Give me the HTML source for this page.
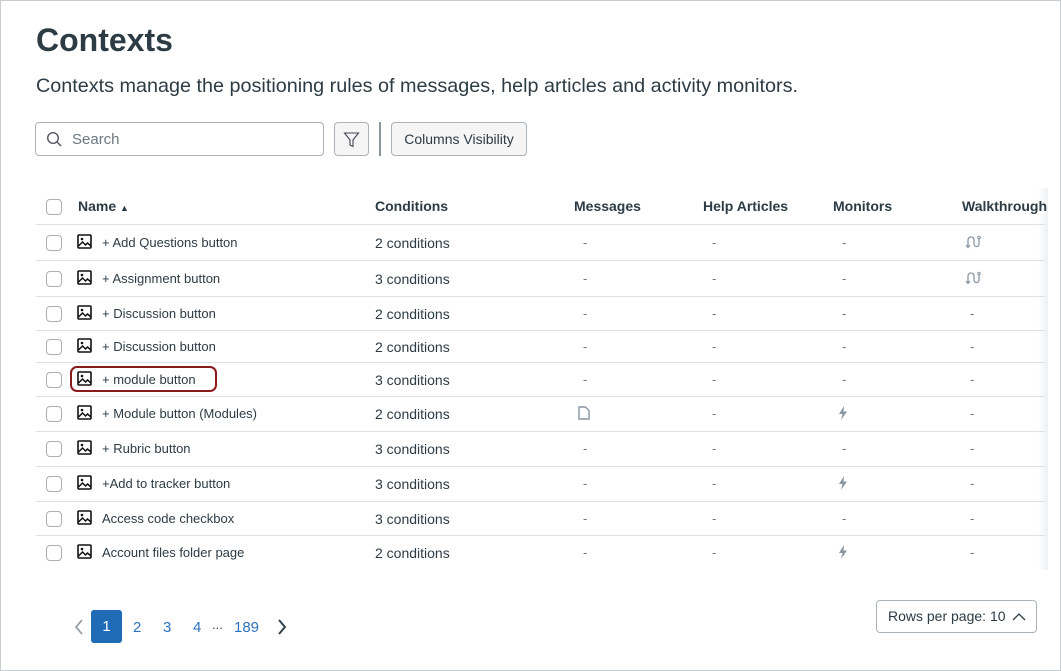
<!DOCTYPE html><html><head><style>
body{margin:0;width:1061px;height:671px;overflow:hidden;background:#fff;font-family:"Liberation Sans",sans-serif;color:#2d3b45}
.frame{position:absolute;left:0;top:0;width:1059px;height:669px;border:1px solid #c7cdd1}
.abs{position:absolute}
h1{position:absolute;left:36px;top:22px;margin:0;font-size:32px;font-weight:bold;color:#2d3b45}
.sub{left:36px;top:75px;font-size:19.8px;color:#2d3b45}
.search{left:35px;top:122px;width:287px;height:32px;border:1px solid #aab3ba;border-radius:4px}
.btn{border:1px solid #aab3ba;border-radius:4px;background:#f5f5f5;height:32px}
.cb{position:absolute;left:46px;width:14px;height:14px;border:1px solid #a8b0b6;border-radius:4px}
.row{position:absolute;left:0;width:1045px;font-size:13px;color:#2d3b45}
.row span{position:absolute;top:0}
.line{position:absolute;left:36px;width:1009px;height:1px;background:#dde1e4}
.dash{color:#6b7780}
.hd{font-weight:bold;font-size:14px}
</style></head><body><div class="frame"></div>
<h1>Contexts</h1>
<div class="abs sub">Contexts manage the positioning rules of messages, help articles and activity monitors.</div>
<div class="abs search"><svg class="abs" style="left:10px;top:8px" width="16" height="16" viewBox="0 0 16 16"><circle cx="7" cy="7" r="5.3" fill="none" stroke="#556" stroke-width="1.4"/><path d="M11 11l4 4" stroke="#556" stroke-width="1.4"/></svg><span class="abs" style="left:36px;top:8px;font-size:15px;color:#6b7780">Search</span></div>
<div class="abs btn" style="left:334px;top:122px;width:33px"><svg class="abs" style="left:8px;top:8px" width="17" height="17" viewBox="0 0 17 17"><path d="M1.5 2h14l-5.5 7v6.5l-3-1.5V9z" fill="none" stroke="#445" stroke-width="1.1"/></svg></div>
<div class="abs" style="left:379px;top:122px;width:2px;height:34px;background:#8a949b"></div>
<div class="abs btn" style="left:391px;top:122px;width:134px;font-size:14px;line-height:32px;text-align:center">Columns Visibility</div>
<div class="abs" style="left:1038px;top:188px;width:10px;height:382px;background:linear-gradient(90deg,#fff,#eef0f2)"></div>
<div class="row hd" style="top:198px"><div class="cb" style="top:1px"></div><span style="left:78px">Name <span style="position:static;font-size:9px">▲</span></span><span style="left:375px">Conditions</span><span style="left:574px">Messages</span><span style="left:703px">Help Articles</span><span style="left:833px">Monitors</span><span style="left:962px">Walkthrough</span></div>
<div id="rows"></div>
<div class="abs" style="left:70px;top:366px;width:147px;height:26px;border:2px solid #8b1a1a;border-radius:7px;box-sizing:border-box"></div>
<svg class="abs" style="left:74px;top:619px" width="10" height="16" viewBox="0 0 10 16"><path d="M8 1L2 8l6 7" fill="none" stroke="#9aa3aa" stroke-width="1.8"/></svg>
<div class="abs" style="left:91px;top:610px;width:31px;height:33px;background:#1f6bb5;border-radius:3px;color:#fff;font-size:15px;line-height:33px;text-align:center">1</div>
<div class="abs" style="left:133px;top:619px;font-size:15px;color:#2b72c0">2</div>
<div class="abs" style="left:163px;top:619px;font-size:15px;color:#2b72c0">3</div>
<div class="abs" style="left:193px;top:619px;font-size:15px;color:#2b72c0">4</div>
<div class="abs" style="left:212px;top:617px;font-size:13px;color:#2d3b45">...</div>
<div class="abs" style="left:234px;top:619px;font-size:15px;color:#2b72c0">189</div>
<svg class="abs" style="left:277px;top:619px" width="10" height="16" viewBox="0 0 10 16"><path d="M2 1l6 7-6 7" fill="none" stroke="#2d3b45" stroke-width="1.9"/></svg>
<div class="abs btn" style="left:876px;top:600px;width:159px;height:31px;background:#fff;font-size:14px;line-height:31px"><span style="margin-left:11px">Rows per page: 10</span><svg class="abs" style="left:135px;top:11px" width="14" height="9" viewBox="0 0 14 9"><path d="M1 8l6-6 6 6" fill="none" stroke="#2d3b45" stroke-width="1.3"/></svg></div>
<script>
var d=[["+ Add Questions button",2,"-","-","w",242],["+ Assignment button",3,"-","-","w",278],["+ Discussion button",2,"-","-","-",313],["+ Discussion button",2,"-","-","-",346],["+ module button",3,"-","-","-",379],["+ Module button (Modules)",2,"f","b","-",413],["+ Rubric button",3,"-","-","-",448],["+Add to tracker button",3,"-","b","-",483],["Access code checkbox",3,"-","-","-",518],["Account files folder page",2,"-","b","-",552]];
var lines=[224,260,296,330,362,396,431,466,501,535];
var img='<svg width="15" height="15" viewBox="0 0 15 15" style="position:absolute;left:77px;top:-1px"><rect x="1" y="1" width="13" height="13" rx="1" fill="none" stroke="#111" stroke-width="1.6"/><circle cx="5" cy="5" r="1.3" fill="#111"/><path d="M1.5 12l4-4 3 3 2-2 3.5 3" fill="none" stroke="#111" stroke-width="1.5"/></svg>';
var file='<svg width="12" height="14" viewBox="0 0 12 14"><path d="M1 1h6.5L11 4.5V13H1z" fill="none" stroke="#8a96a3" stroke-width="1.4"/></svg>';
var bolt='<svg width="10" height="14" viewBox="0 0 10 14"><path d="M6 0L1 8h3.5L3 14l6-8.5H5.5z" fill="#8a96a3"/></svg>';
var wt='<svg width="16" height="14" viewBox="0 0 16 14"><path d="M3 12V5a3 3 0 016 0v4a2.5 2.5 0 005 0V3" fill="none" stroke="#8a96a3" stroke-width="1.3"/><path d="M1 10l2 2.5 2-2.5" fill="none" stroke="#8a96a3" stroke-width="1.2"/><circle cx="14" cy="2.5" r="1.3" fill="none" stroke="#8a96a3"/></svg>';
var h='';lines.forEach(function(y){h+='<div class="line" style="top:'+y+'px"></div>'});
d.forEach(function(r){var t=r[5]-7;h+='<div class="row" style="top:'+t+'px"><div class="cb" style="top:0px"></div>'+img+'<span style="left:102px">'+r[0]+'</span><span style="left:375px;font-size:14px">'+r[1]+' conditions</span><span class="dash" style="left:'+(r[2]=="f"?578:583)+'px">'+(r[2]=="f"?file:"-")+'</span><span class="dash" style="left:712px">-</span><span class="dash" style="left:'+(r[3]=="b"?838:842)+'px">'+(r[3]=="b"?bolt:"-")+'</span><span class="dash" style="left:'+(r[4]=="w"?965:970)+'px">'+(r[4]=="w"?wt:"-")+'</span></div>'});
document.getElementById('rows').innerHTML=h;
</script>
</body></html>
